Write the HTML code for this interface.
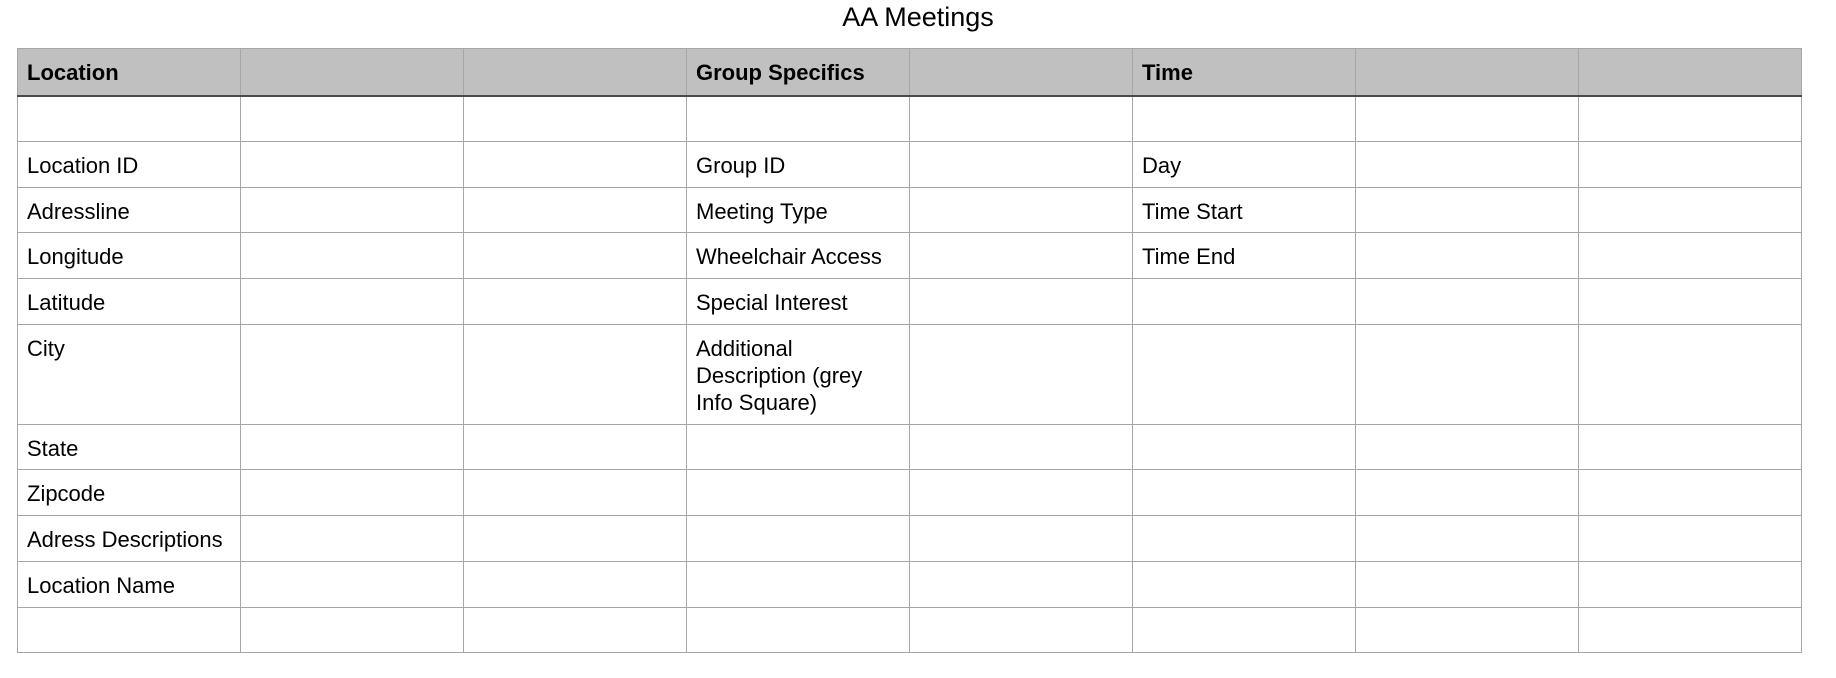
<!DOCTYPE html>
<html><head><meta charset="utf-8"><style>
body{margin:0;background:#fff;width:1836px;height:678px;overflow:hidden;font-family:"Liberation Sans",Arial,sans-serif;color:#000}
.t{position:absolute;top:1px;left:0;width:1836px;text-align:center;font-size:27px;line-height:32px}
table{position:absolute;left:17px;top:48px;border-collapse:collapse;table-layout:fixed;width:1785px}
td{border:1px solid #a6a6a6;padding:0 9px;font-size:22px;vertical-align:top;box-sizing:border-box;line-height:27px;padding-top:10px;overflow:hidden;white-space:nowrap}
tr.h td{background:#bfc0bf;font-weight:bold;border-bottom:2px solid #4a4a4a;padding-top:10px}
tr.tall td{white-space:normal}
</style></head><body>
<div class="t">AA Meetings</div>
<table>
<colgroup><col style="width:223px"><col style="width:223px"><col style="width:223px"><col style="width:223px"><col style="width:223px"><col style="width:223px"><col style="width:223px"><col style="width:223px"></colgroup>
<tr class="h" style="height:47px"><td>Location</td><td></td><td></td><td>Group Specifics</td><td></td><td>Time</td><td></td><td></td></tr>
<tr style="height:46px"><td></td><td></td><td></td><td></td><td></td><td></td><td></td><td></td></tr>
<tr style="height:46px"><td>Location ID</td><td></td><td></td><td>Group ID</td><td></td><td>Day</td><td></td><td></td></tr>
<tr style="height:45px"><td>Adressline</td><td></td><td></td><td>Meeting Type</td><td></td><td>Time Start</td><td></td><td></td></tr>
<tr style="height:46px"><td>Longitude</td><td></td><td></td><td>Wheelchair Access</td><td></td><td>Time End</td><td></td><td></td></tr>
<tr style="height:46px"><td>Latitude</td><td></td><td></td><td>Special Interest</td><td></td><td></td><td></td><td></td></tr>
<tr class="tall" style="height:100px"><td>City</td><td></td><td></td><td>Additional Description (grey Info Square)</td><td></td><td></td><td></td><td></td></tr>
<tr style="height:45px"><td>State</td><td></td><td></td><td></td><td></td><td></td><td></td><td></td></tr>
<tr style="height:46px"><td>Zipcode</td><td></td><td></td><td></td><td></td><td></td><td></td><td></td></tr>
<tr style="height:46px"><td>Adress Descriptions</td><td></td><td></td><td></td><td></td><td></td><td></td><td></td></tr>
<tr style="height:46px"><td>Location Name</td><td></td><td></td><td></td><td></td><td></td><td></td><td></td></tr>
<tr style="height:45px"><td></td><td></td><td></td><td></td><td></td><td></td><td></td><td></td></tr>
</table>
</body></html>
